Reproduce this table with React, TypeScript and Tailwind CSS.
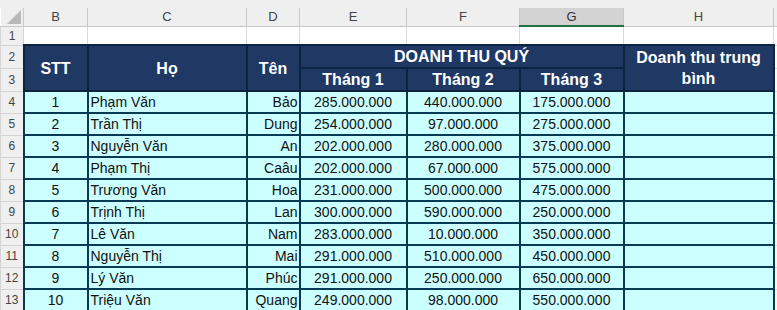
import React from "react";

const data: [string, string, string, string, string, string][] = [
  ["1", "Phạm Văn", "Bảo", "285.000.000", "440.000.000", "175.000.000"],
  ["2", "Trần Thị", "Dung", "254.000.000", "97.000.000", "275.000.000"],
  ["3", "Nguyễn Văn", "An", "202.000.000", "280.000.000", "375.000.000"],
  ["4", "Phạm Thị", "Caâu", "202.000.000", "67.000.000", "575.000.000"],
  ["5", "Trương Văn", "Hoa", "231.000.000", "500.000.000", "475.000.000"],
  ["6", "Trịnh Thị", "Lan", "300.000.000", "590.000.000", "250.000.000"],
  ["7", "Lê Văn", "Nam", "283.000.000", "10.000.000", "350.000.000"],
  ["8", "Nguyễn Thị", "Mai", "291.000.000", "510.000.000", "450.000.000"],
  ["9", "Lý Văn", "Phúc", "291.000.000", "250.000.000", "650.000.000"],
  ["10", "Triệu Văn", "Quang", "249.000.000", "98.000.000", "550.000.000"],
];

const rowHead =
  "bg-[#efefef] text-[#444] text-[12px] text-center border border-[#d4d4d4] p-0";
const hdr =
  "bg-[#1f3864] text-white font-bold text-[16px] text-center border-2 border-[#0d2440] p-0 leading-[21px]";
const cell =
  "bg-[#ccffff] text-[#111] text-[14px] border-2 border-[#073a55] p-0 leading-[18px] whitespace-nowrap overflow-hidden";

export default function App() {
  const letters = ["B", "C", "D", "E", "F", "G", "H", ""];
  return (
    <div
      className="w-[777px] h-[310px] overflow-hidden bg-white"
      style={{ fontFamily: '"Liberation Sans", Arial, sans-serif' }}
    >
      <div className="h-[8px] bg-[#efefef]" />
      <table className="border-collapse table-fixed w-[805px]">
        <colgroup>
          <col className="w-[23px]" />
          <col className="w-[64px]" />
          <col className="w-[159px]" />
          <col className="w-[53px]" />
          <col className="w-[107px]" />
          <col className="w-[113px]" />
          <col className="w-[104px]" />
          <col className="w-[150px]" />
          <col className="w-[32px]" />
        </colgroup>
        <tbody>
          <tr className="h-[18px]">
            <td className="bg-[#efefef] border-r border-b border-[#c8c8c8] p-0 relative">
              <svg width="14" height="14" className="absolute right-[2px] bottom-[2px]">
                <polygon points="14,0 14,14 0,14" fill="#b8b8b8" />
              </svg>
            </td>
            {letters.map((l, i) => (
              <td
                key={i}
                className={
                  l === "G"
                    ? "bg-[#d3d3d3] text-[#333] text-[13px] text-center border-r border-[#c8c8c8] border-b-2 border-b-[#217346] p-0 leading-[16px]"
                    : "bg-[#efefef] text-[#444] text-[13px] text-center border-r border-b border-[#c8c8c8] p-0 leading-[16px]"
                }
              >
                {l}
              </td>
            ))}
          </tr>
          <tr className="h-[18px]">
            <td className={rowHead}>1</td>
            {letters.map((_, i) => (
              <td key={i} className="border border-[#dadada] p-0" />
            ))}
          </tr>
          <tr className="h-[20px]">
            <td className={rowHead}>2</td>
            <td rowSpan={2} className={hdr}>STT</td>
            <td rowSpan={2} className={hdr}>Họ</td>
            <td rowSpan={2} className={hdr}>Tên</td>
            <td colSpan={3} className={hdr}>DOANH THU QUÝ</td>
            <td rowSpan={2} className={hdr + " align-middle"}>
              Doanh thu trung bình
            </td>
            <td className="border border-[#dadada] p-0" />
          </tr>
          <tr className="h-[21px]">
            <td className={rowHead}>3</td>
            <td className={hdr}>Tháng 1</td>
            <td className={hdr}>Tháng 2</td>
            <td className={hdr}>Tháng 3</td>
            <td className="border border-[#dadada] p-0" />
          </tr>
          {data.map((r, i) => (
            <tr key={i} className="h-[22px]">
              <td className={rowHead}>{i + 4}</td>
              <td className={cell + " text-center"}>{r[0]}</td>
              <td className={cell + " text-left pl-[2px]"}>{r[1]}</td>
              <td className={cell + " text-right pr-[1px]"}>{r[2]}</td>
              <td className={cell + " text-center"}>{r[3]}</td>
              <td className={cell + " text-center"}>{r[4]}</td>
              <td className={cell + " text-center"}>{r[5]}</td>
              <td className={cell} />
              <td className="border border-[#dadada] p-0" />
            </tr>
          ))}
        </tbody>
      </table>
    </div>
  );
}
